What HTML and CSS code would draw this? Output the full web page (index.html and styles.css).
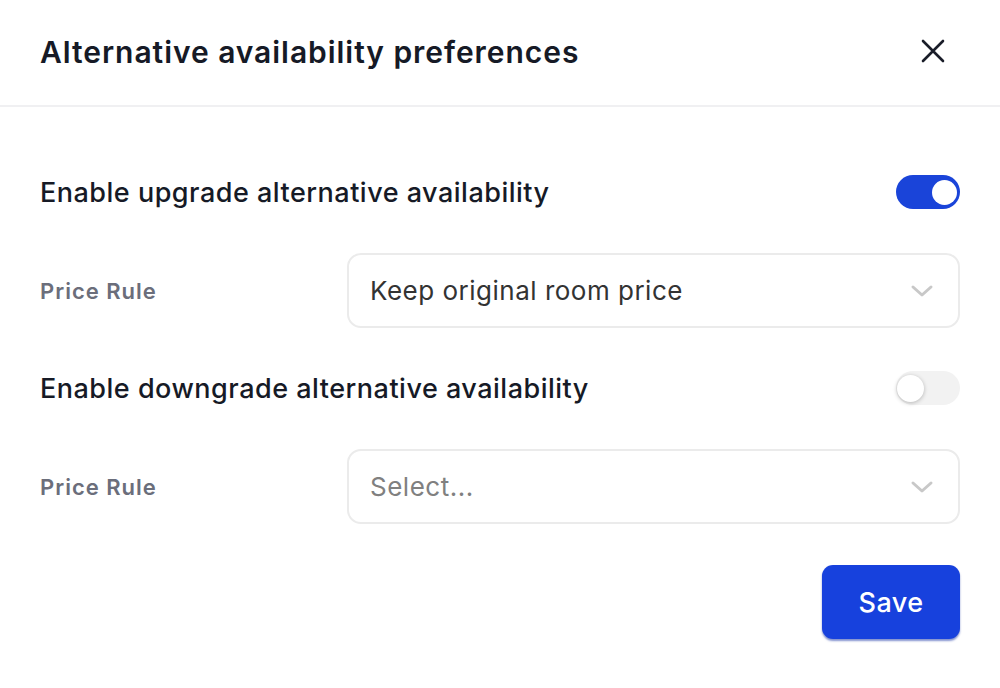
FILE: index.html
```html
<!DOCTYPE html>
<html>
<head>
<meta charset="utf-8">
<link rel="stylesheet" href="styles.css">
</head>
<body>
<div class="modal">
  <div class="header">
    <h1 class="title">Alternative availability preferences</h1>
    <button class="close" aria-label="Close">
      <svg width="26" height="26" viewBox="0 0 26 26"><path d="M3 3L23 23M23 3L3 23" stroke="#1a1d29" stroke-width="2.6" stroke-linecap="round"/></svg>
    </button>
  </div>
  <div class="body">
    <div class="toggle-row">
      <span class="toggle-label">Enable upgrade alternative availability</span>
      <span class="switch on"><span class="knob"></span></span>
    </div>
    <div class="field-row">
      <span class="field-label">Price Rule</span>
      <div class="select">
        <span class="value">Keep original room price</span>
        <svg class="chev" width="24" height="14" viewBox="0 0 24 14"><path d="M3 3L12 11L21 3" fill="none" stroke="#c8c8c8" stroke-width="3" stroke-linecap="round" stroke-linejoin="round"/></svg>
      </div>
    </div>
    <div class="toggle-row">
      <span class="toggle-label">Enable downgrade alternative availability</span>
      <span class="switch off"><span class="knob"></span></span>
    </div>
    <div class="field-row">
      <span class="field-label">Price Rule</span>
      <div class="select">
        <span class="value placeholder">Select...</span>
        <svg class="chev" width="24" height="14" viewBox="0 0 24 14"><path d="M3 3L12 11L21 3" fill="none" stroke="#c8c8c8" stroke-width="3" stroke-linecap="round" stroke-linejoin="round"/></svg>
      </div>
    </div>
    <div class="actions">
      <button class="save">Save</button>
    </div>
  </div>
</div>
</body>
</html>
```
FILE: styles.css
```css
* { box-sizing: border-box; }
html, body { margin: 0; padding: 0; background: #fff; }
body { font-family: Inter, "Noto Sans", sans-serif; color: #1a1d29; }
.modal { width: 1000px; height: 688px; }
.header {
  height: 107px;
  display: flex;
  align-items: center;
  justify-content: space-between;
  padding: 0 40px;
  border-bottom: 2px solid #f0f0f2;
}
.title { margin: 0; font-size: 30px; font-weight: 600; letter-spacing: 0.95px; color: #161a26; padding-bottom: 2px; }
.close { border: 0; background: none; padding: 0; width: 26px; height: 26px; margin-right: 14px; margin-bottom: 4px; cursor: pointer; }
.close svg { display: block; }
.body { padding: 52px 40px 0; display: flex; flex-direction: column; }
.toggle-row { display: flex; align-items: center; justify-content: space-between; height: 66px; }
.toggle-label { font-size: 27px; font-weight: 500; letter-spacing: 0.5px; color: #161a26; }
.switch { width: 64px; height: 34px; border-radius: 17px; display: flex; align-items: center; padding: 0 3px; }
.switch.on { background: #1a44d9; justify-content: flex-end; }
.switch.off { background: #f2f2f2; justify-content: flex-start; padding: 0 1px; }
.knob { width: 25px; height: 25px; border-radius: 50%; background: #fff; }
.switch.off .knob { width: 27px; height: 27px; box-shadow: 0 1px 4px rgba(0,0,0,0.25); }
.field-row { display: flex; align-items: center; margin: 28px 0 27px; }
.field-label { width: 307px; font-size: 22px; font-weight: 600; letter-spacing: 1px; color: #6b6e7b; }
.select {
  flex: 1;
  height: 75px;
  border: 2px solid #ebebeb;
  border-radius: 14px;
  display: flex;
  align-items: center;
  justify-content: space-between;
  padding: 0 24px 0 21px;
}
.value { font-family: Inter, "Noto Sans", sans-serif; font-size: 26px; letter-spacing: 0.5px; color: #333; }
.value.placeholder { color: #808080; }
.chev { display: block; }
.actions { display: flex; justify-content: flex-end; margin-top: 14px; }
.save {
  width: 138px; height: 74px;
  border: 0; border-radius: 11px;
  background: #1741dd;
  color: #fff;
  font-family: Inter, sans-serif;
  font-size: 27px; font-weight: 500; letter-spacing: 0.4px;
  box-shadow: 0 2px 2px rgba(10,40,160,0.5);
}
```
